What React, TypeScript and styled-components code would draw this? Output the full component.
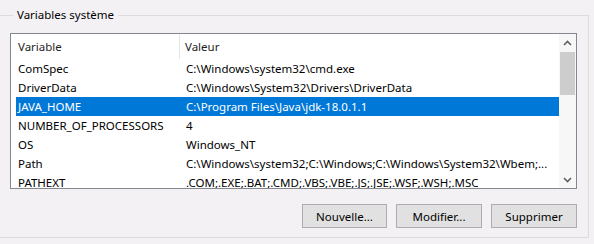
import styled, { createGlobalStyle } from "styled-components";

const GlobalStyle = createGlobalStyle`
  html, body {
    margin: 0;
    padding: 0;
    background: #f4f1f4;
  }
  body {
    font-family: "Noto Sans", "Open Sans", sans-serif;
    font-size: 11.5px;
    color: #000;
  }
`;

const Page = styled.div`
  width: 594px;
  height: 244px;
  box-sizing: border-box;
  padding: 7px 5px 0 0;
  overflow: hidden;
`;

const GroupBox = styled.fieldset`
  margin: 0;
  padding: 10px 11px 9px 10px;
  border: 1px solid #dcdcdc;
  border-left: none;
  min-width: 0;
`;

const GroupTitle = styled.legend`
  margin-left: 3px;
  padding: 0 4px;
  line-height: 16px;
  color: #000;
`;

const ListView = styled.div`
  height: 156px;
  border: 1px solid #828790;
  background: #fff;
  box-sizing: border-box;
  display: grid;
  grid-template-columns: 1fr 17px;
  overflow: hidden;
`;

const ListBody = styled.div`
  overflow: hidden;
`;

const HeaderRow = styled.div`
  display: grid;
  grid-template-columns: 169px 1fr;
  height: 25px;
  align-items: stretch;
`;

const HeaderCell = styled.div<{ $first?: boolean }>`
  display: flex;
  align-items: center;
  padding-left: ${(p) => (p.$first ? "7px" : "5px")};
  border-right: ${(p) => (p.$first ? "1px solid #e5e5e5" : "none")};
  color: #1e1e1e;
`;

const Row = styled.div<{ $selected?: boolean }>`
  display: grid;
  grid-template-columns: 164px 1fr;
  height: 19px;
  margin-left: 5px;
  align-items: center;
  background: ${(p) => (p.$selected ? "#0078d7" : "transparent")};
  color: ${(p) => (p.$selected ? "#fff" : "#000")};
  white-space: nowrap;
`;

const Cell = styled.div<{ $first?: boolean }>`
  padding-left: ${(p) => (p.$first ? "2px" : "6px")};
  overflow: hidden;
`;

const ScrollBar = styled.div`
  background: #f7f7f7;
  display: grid;
  grid-template-rows: 17px 1fr 17px;
`;

const ScrollArrow = styled.div`
  display: flex;
  align-items: center;
  justify-content: center;
`;

const Track = styled.div``;

const Thumb = styled.div`
  margin: 1px 1px 0 1px;
  height: 43px;
  background: #cdcdcd;
`;

const ButtonRow = styled.div`
  display: flex;
  justify-content: flex-end;
  gap: 9px;
  margin-top: 15px;
`;

const Button = styled.button<{ $w: number }>`
  width: ${(p) => p.$w}px;
  height: 24px;
  box-sizing: border-box;
  background: #e1e1e1;
  border: 1px solid #adadad;
  font-family: inherit;
  font-size: 11.5px;
  color: #000;
  padding: 0;
`;

const Chevron = ({ down }: { down?: boolean }) => (
  <svg width="9" height="6" viewBox="0 0 9 6">
    <path
      d={down ? "M1 1 L4.5 4.5 L8 1" : "M1 5 L4.5 1.5 L8 5"}
      fill="none"
      stroke="#606060"
      strokeWidth="1.6"
    />
  </svg>
);

const rows = [
  ["ComSpec", "C:\\Windows\\system32\\cmd.exe"],
  ["DriverData", "C:\\Windows\\System32\\Drivers\\DriverData"],
  ["JAVA_HOME", "C:\\Program Files\\Java\\jdk-18.0.1.1"],
  ["NUMBER_OF_PROCESSORS", "4"],
  ["OS", "Windows_NT"],
  ["Path", "C:\\Windows\\system32;C:\\Windows;C:\\Windows\\System32\\Wbem;..."],
  ["PATHEXT", ".COM;.EXE;.BAT;.CMD;.VBS;.VBE;.JS;.JSE;.WSF;.WSH;.MSC"],
];

export default function App() {
  return (
    <>
      <GlobalStyle />
      <Page>
        <GroupBox>
          <GroupTitle>Variables système</GroupTitle>
          <ListView>
            <ListBody>
              <HeaderRow>
                <HeaderCell $first>Variable</HeaderCell>
                <HeaderCell>Valeur</HeaderCell>
              </HeaderRow>
              {rows.map(([name, value]) => (
                <Row key={name} $selected={name === "JAVA_HOME"}>
                  <Cell $first>{name}</Cell>
                  <Cell>{value}</Cell>
                </Row>
              ))}
            </ListBody>
            <ScrollBar>
              <ScrollArrow>
                <Chevron />
              </ScrollArrow>
              <Track>
                <Thumb />
              </Track>
              <ScrollArrow>
                <Chevron down />
              </ScrollArrow>
            </ScrollBar>
          </ListView>
          <ButtonRow>
            <Button $w={85}>Nouvelle...</Button>
            <Button $w={86}>Modifier...</Button>
            <Button $w={86}>Supprimer</Button>
          </ButtonRow>
        </GroupBox>
      </Page>
    </>
  );
}
